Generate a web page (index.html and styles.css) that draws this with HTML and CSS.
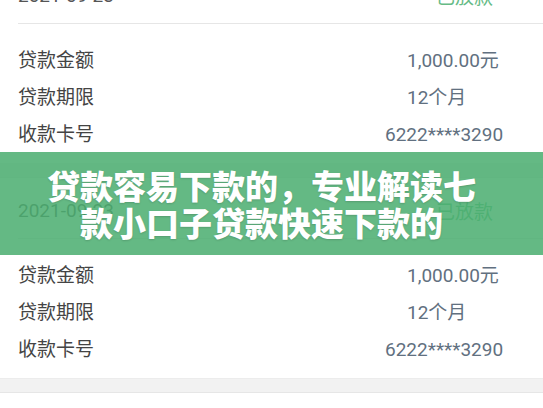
FILE: index.html
```html
<!DOCTYPE html>
<html lang="zh-CN">
<head>
    <meta charset="UTF-8">
    <title>贷款记录</title>
    <meta name="viewport" content="width=device-width, initial-scale=1.0">
    <link rel="stylesheet" href="styles.css">
</head>
<body>
    <div class="list">
        <div class="card">
            <div class="card-head">
                <span class="date">2021-09-23</span>
                <span class="status">已放款</span>
            </div>
            <div class="card-body">
                <div class="row"><span class="label">贷款金额</span><span class="value">1,000.00元</span></div>
                <div class="row"><span class="label">贷款期限</span><span class="value">12个月</span></div>
                <div class="row"><span class="label">收款卡号</span><span class="value card-no">6222****3290</span></div>
            </div>
        </div>
        <div class="gap"></div>
        <div class="card">
            <div class="card-head">
                <span class="date">2021-09-23</span>
                <span class="status">已放款</span>
            </div>
            <div class="card-body">
                <div class="row"><span class="label">贷款金额</span><span class="value">1,000.00元</span></div>
                <div class="row"><span class="label">贷款期限</span><span class="value">12个月</span></div>
                <div class="row"><span class="label">收款卡号</span><span class="value card-no">6222****3290</span></div>
            </div>
        </div>
        <div class="gap"></div>
        <div class="card"></div>
    </div>

    <div class="banner">
        <h1>贷款容易下款的，专业解读七款小口子贷款快速下款的</h1>
    </div>
</body>
</html>
```

FILE: styles.css
```css
body {
    margin: 0;
    padding: 0;
    background-color: #fff;
    font-family: Roboto, "Noto Sans CJK SC", sans-serif;
    overflow: hidden;
    height: 408px;
    position: relative;
}

.list {
    margin-top: -37px;
}

.card {
    background-color: #fff;
    padding-left: 18px;
}

.card-head {
    height: 61px;
    display: flex;
    align-items: center;
    padding-top: 4px;
    box-sizing: border-box;
    border-bottom: 1px solid #e6e6e6;
}

.date {
    font-size: 19px;
    color: #555;
}

.status {
    margin-left: auto;
    margin-right: 50px;
    font-size: 19px;
    color: #66bb86;
}

.card-body {
    padding: 18px 0 10px;
}

.row {
    display: flex;
    line-height: 37px;
    height: 37px;
}

.label {
    font-size: 19px;
    color: #444;
    width: 389px;
}

.value {
    font-size: 19px;
    color: #617080;
}

.card-no {
    margin-left: -22px;
}

.gap {
    height: 15px;
    background-color: #f2f2f2;
    border-top: 1px solid #ececec;
    border-bottom: 1px solid #e6e6e6;
    box-sizing: border-box;
}

.banner {
    position: absolute;
    top: 152px;
    left: 0;
    right: 0;
    height: 103px;
    background-color: rgba(75, 173, 112, 0.86);
    display: flex;
    align-items: center;
    padding: 0 61px 0 41px;
}

.banner h1 {
    margin: 0;
    width: 100%;
    text-align: center;
    font-family: "Noto Sans CJK SC", sans-serif;
    font-weight: 900;
    font-size: 33px;
    line-height: 37px;
    color: #fff;
    text-shadow: 0 1px 2px rgba(0, 0, 0, 0.15);
}
```
